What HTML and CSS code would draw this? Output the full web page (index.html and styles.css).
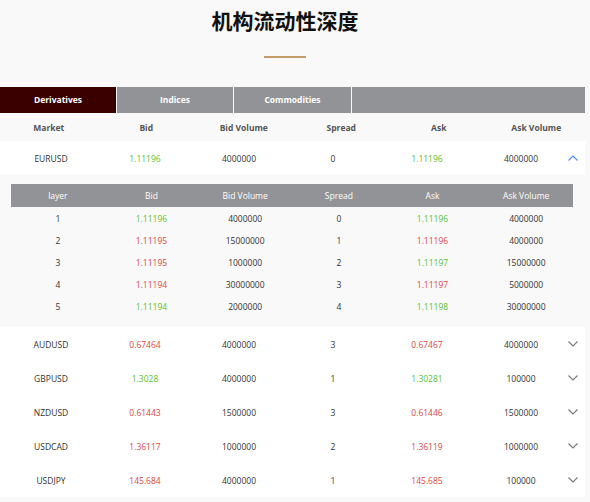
FILE: index.html
```html
<!DOCTYPE html>
<html lang="zh">
<head>
<meta charset="utf-8">
<title>机构流动性深度</title>
<link rel="stylesheet" href="styles.css">
</head>
<body>
<div class="page">
  <h1 class="title">机构流动性深度</h1>
  <div class="divider"></div>

  <div class="tabs">
    <div class="tab active">Derivatives</div>
    <div class="tab">Indices</div>
    <div class="tab">Commodities</div>
    <div class="tab"></div>
  </div>

  <div class="head">
    <span>Market</span><span>Bid</span><span>Bid Volume</span><span>Spread</span><span>Ask</span><span>Ask Volume</span>
  </div>

  <div class="row">
    <span>EURUSD</span><span class="up">1.11196</span><span>4000000</span><span>0</span><span class="up">1.11196</span><span>4000000</span>
    <svg class="chev open" viewBox="0 0 10 6" width="10" height="6"><path d="M0.5 5.5 L5 1 L9.5 5.5" fill="none" stroke="currentColor" stroke-width="1.1"/></svg>
  </div>

  <div class="detail">
    <div class="inner">
      <div class="ihead"><span>layer</span><span>Bid</span><span>Bid Volume</span><span>Spread</span><span>Ask</span><span>Ask Volume</span></div>
      <div class="irow"><span>1</span><span class="up">1.11196</span><span>4000000</span><span>0</span><span class="up">1.11196</span><span>4000000</span></div>
      <div class="irow"><span>2</span><span class="down">1.11195</span><span>15000000</span><span>1</span><span class="down">1.11196</span><span>4000000</span></div>
      <div class="irow"><span>3</span><span class="down">1.11195</span><span>1000000</span><span>2</span><span class="up">1.11197</span><span>15000000</span></div>
      <div class="irow"><span>4</span><span class="down">1.11194</span><span>30000000</span><span>3</span><span class="down">1.11197</span><span>5000000</span></div>
      <div class="irow"><span>5</span><span class="up">1.11194</span><span>2000000</span><span>4</span><span class="up">1.11198</span><span>30000000</span></div>
    </div>
  </div>

  <div class="rows">
    <div class="row">
      <span>AUDUSD</span><span class="down">0.67464</span><span>4000000</span><span>3</span><span class="down">0.67467</span><span>4000000</span>
      <svg class="chev" viewBox="0 0 10 6" width="10" height="6"><path d="M0.5 0.5 L5 5 L9.5 0.5" fill="none" stroke="currentColor" stroke-width="1.1"/></svg>
    </div>
    <div class="row">
      <span>GBPUSD</span><span class="up">1.3028</span><span>4000000</span><span>1</span><span class="up">1.30281</span><span>100000</span>
      <svg class="chev" viewBox="0 0 10 6" width="10" height="6"><path d="M0.5 0.5 L5 5 L9.5 0.5" fill="none" stroke="currentColor" stroke-width="1.1"/></svg>
    </div>
    <div class="row">
      <span>NZDUSD</span><span class="down">0.61443</span><span>1500000</span><span>3</span><span class="down">0.61446</span><span>1500000</span>
      <svg class="chev" viewBox="0 0 10 6" width="10" height="6"><path d="M0.5 0.5 L5 5 L9.5 0.5" fill="none" stroke="currentColor" stroke-width="1.1"/></svg>
    </div>
    <div class="row">
      <span>USDCAD</span><span class="down">1.36117</span><span>1000000</span><span>2</span><span class="down">1.36119</span><span>1000000</span>
      <svg class="chev" viewBox="0 0 10 6" width="10" height="6"><path d="M0.5 0.5 L5 5 L9.5 0.5" fill="none" stroke="currentColor" stroke-width="1.1"/></svg>
    </div>
    <div class="row">
      <span>USDJPY</span><span class="down">145.684</span><span>4000000</span><span>1</span><span class="down">145.685</span><span>100000</span>
      <svg class="chev" viewBox="0 0 10 6" width="10" height="6"><path d="M0.5 0.5 L5 5 L9.5 0.5" fill="none" stroke="currentColor" stroke-width="1.1"/></svg>
    </div>
  </div>
</div>
</body>
</html>
```

FILE: styles.css
```css
html, body {
  margin: 0;
  padding: 0;
  background: #f9f9f9;
}

body {
  font-family: "Open Sans", "Noto Sans", sans-serif;
  font-size: 8.5px;
  color: #333;
}

.page {
  width: 585px;
}

.title {
  width: 570px;
  margin: 10px 0 0;
  font-family: "Noto Sans CJK SC", "Noto Sans", sans-serif;
  font-size: 21px;
  line-height: 21px;
  font-weight: 700;
  color: #111;
  text-align: center;
}

.divider {
  width: 42px;
  height: 2px;
  margin: 25px 0 0 264px;
  background: #c29c6c;
}

.tabs {
  display: grid;
  grid-template-columns: 116px 116px 117px 1fr;
  column-gap: 1px;
  margin-top: 29px;
  height: 26px;
}

.tab {
  background: #929396;
  color: #fff;
  font-weight: 700;
  display: flex;
  align-items: center;
  justify-content: center;
  padding-bottom: 1px;
}

.tab.active {
  background: #3a0000;
}

.head {
  display: grid;
  grid-template-columns: repeat(6, 1fr);
  height: 28px;
  align-items: center;
  text-align: center;
  font-weight: 700;
  color: #555;
}

.row {
  display: grid;
  grid-template-columns: repeat(6, 94px) 10px;
  padding-left: 4px;
  height: 34px;
  align-items: center;
  text-align: center;
  background: #fff;
  color: #333;
}

.chev {
  display: block;
  color: #777;
}

.chev.open {
  color: #4a8ef8;
}

.detail {
  padding: 9px 12px 10px 11px;
  background: #f9f9f9;
}

.ihead, .irow {
  display: grid;
  grid-template-columns: repeat(6, 1fr);
  align-items: center;
  text-align: center;
}

.ihead {
  height: 23px;
  background: #929396;
  color: #fff;
}

.irow {
  height: 22px;
  color: #333;
}

.up {
  color: #5cc22e;
}

.down {
  color: #e0483f;
}
```
